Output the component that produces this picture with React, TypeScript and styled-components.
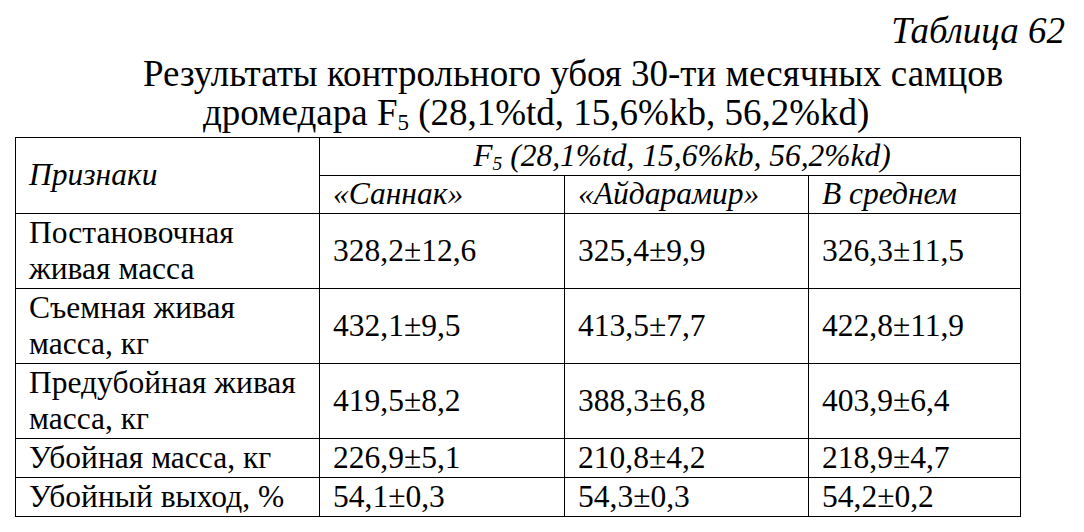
import React from "react";
import styled, { createGlobalStyle } from "styled-components";

const Global = createGlobalStyle`
  html, body { margin: 0; padding: 0; background: #fff; }
  body { font-family: "Liberation Serif", "Times New Roman", serif; color: #000; }
`;

const Page = styled.div`
  width: 1084px;
  height: 532px;
  display: flex;
  flex-direction: column;
  padding-top: 8px;
  box-sizing: border-box;
`;

const Caption = styled.div`
  align-self: flex-end;
  margin-right: 19px;
  font-style: italic;
  font-size: 37px;
  line-height: 46px;
`;

const TitleLine = styled.div<{ $indent: number }>`
  margin-left: ${(p) => p.$indent}px;
  font-size: 37px;
  line-height: 39px;
  white-space: nowrap;
  &:first-of-type { margin-top: 1px; }
`;

const Sub = styled.sub`
  font-size: 0.62em;
  vertical-align: -0.2em;
  line-height: 0;
`;

const Table = styled.table`
  margin-left: 15px;
  margin-top: 5px;
  border-collapse: collapse;
  table-layout: fixed;
  width: 1005px;
`;

const Cell = styled.td<{ $h?: number; $italic?: boolean; $center?: boolean }>`
  border: 1.5px solid #000;
  padding: 0 0 0 ${(p) => (p.$center ? 24 : 13)}px;
  height: ${(p) => (p.$h ? `${p.$h}px` : "auto")};
  font-style: ${(p) => (p.$italic ? "italic" : "normal")};
  text-align: ${(p) => (p.$center ? "center" : "left")};
  font-size: 31.5px;
  line-height: 36.5px;
  vertical-align: middle;
  white-space: nowrap;
  box-sizing: border-box;
`;

const rows: { label: React.ReactNode; h: number; v: string[] }[] = [
  { label: <>Постановочная<br />живая масса</>, h: 75, v: ["328,2±12,6", "325,4±9,9", "326,3±11,5"] },
  { label: <>Съемная живая<br />масса, кг</>, h: 75, v: ["432,1±9,5", "413,5±7,7", "422,8±11,9"] },
  { label: <>Предубойная живая<br />масса, кг</>, h: 75, v: ["419,5±8,2", "388,3±6,8", "403,9±6,4"] },
  { label: "Убойная масса, кг", h: 39, v: ["226,9±5,1", "210,8±4,2", "218,9±4,7"] },
  { label: "Убойный выход, %", h: 39, v: ["54,1±0,3", "54,3±0,3", "54,2±0,2"] },
];

export default function App() {
  return (
    <Page>
      <Global />
      <Caption>Таблица 62</Caption>
      <TitleLine $indent={143}>Результаты контрольного убоя 30-ти месячных самцов</TitleLine>
      <TitleLine $indent={203}>
        дромедара F<Sub>5</Sub> (28,1%td, 15,6%kb, 56,2%kd)
      </TitleLine>
      <Table>
        <colgroup>
          <col style={{ width: 304 }} />
          <col style={{ width: 245 }} />
          <col style={{ width: 244 }} />
          <col style={{ width: 212 }} />
        </colgroup>
        <tbody>
          <tr>
            <Cell rowSpan={2} $italic>Признаки</Cell>
            <Cell colSpan={3} $italic $center $h={38}>
              F<Sub>5</Sub> (28,1%td, 15,6%kb, 56,2%kd)
            </Cell>
          </tr>
          <tr>
            <Cell $italic $h={38}>«Саннак»</Cell>
            <Cell $italic>«Айдарамир»</Cell>
            <Cell $italic>В среднем</Cell>
          </tr>
          {rows.map((r, i) => (
            <tr key={i}>
              <Cell $h={r.h}>{r.label}</Cell>
              {r.v.map((x, j) => (
                <Cell key={j}>{x}</Cell>
              ))}
            </tr>
          ))}
        </tbody>
      </Table>
    </Page>
  );
}
